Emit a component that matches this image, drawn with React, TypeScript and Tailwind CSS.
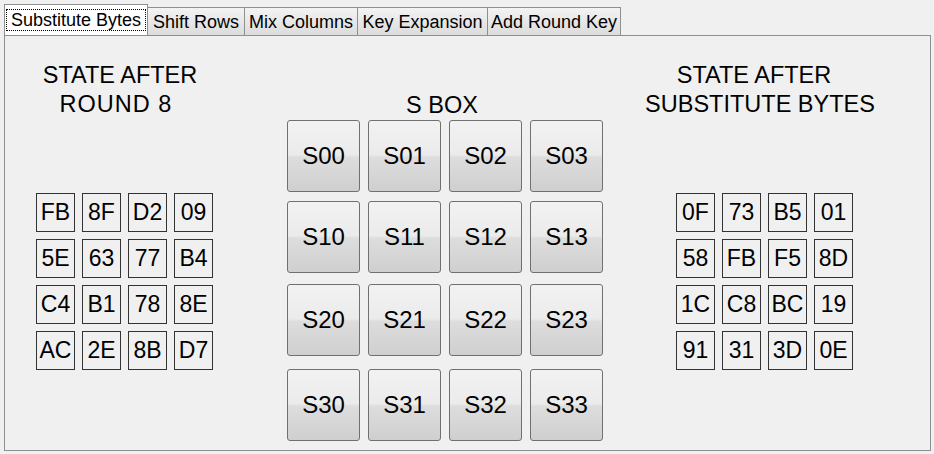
import React from 'react';

const TABS: { label: string; width: string }[] = [
  { label: 'Substitute Bytes', width: 'w-[144px]' },
  { label: 'Shift Rows', width: 'w-[98px]' },
  { label: 'Mix Columns', width: 'w-[114px]' },
  { label: 'Key Expansion', width: 'w-[131px]' },
  { label: 'Add Round Key', width: 'w-[134px]' },
];

const STATE_BEFORE = [
  ['FB', '8F', 'D2', '09'],
  ['5E', '63', '77', 'B4'],
  ['C4', 'B1', '78', '8E'],
  ['AC', '2E', '8B', 'D7'],
];

const STATE_AFTER = [
  ['0F', '73', 'B5', '01'],
  ['58', 'FB', 'F5', '8D'],
  ['1C', 'C8', 'BC', '19'],
  ['91', '31', '3D', '0E'],
];

// gaps between s-box rows are uneven in the original
const SBOX_ROW_MARGIN = ['mt-0', 'mt-[9px]', 'mt-[11px]', 'mt-[13px]'];

function ByteGrid({ rows }: { rows: string[][] }) {
  return (
    <div className="flex flex-col gap-[7px]">
      {rows.map((row, r) => (
        <div key={r} className="flex gap-[7px]">
          {row.map((b, c) => (
            <div
              key={c}
              className="flex h-[39px] w-[39px] items-center justify-center border border-[#333333] bg-[#f0f0f0] text-[23px] leading-none text-black"
            >
              {b}
            </div>
          ))}
        </div>
      ))}
    </div>
  );
}

export default function App() {
  return (
    <div
      className="h-[454px] w-[934px] overflow-hidden bg-[#f0f0f0] text-black"
      style={{ fontFamily: '"Liberation Sans", Arial, sans-serif' }}
    >
      {/* Tab strip */}
      <div className="flex h-[35px] items-end pl-[4px] pt-[4px]">
        {TABS.map((tab, i) => {
          const active = i === 0;
          return (
            <div
              key={tab.label}
              className={`relative ${tab.width} -mr-px flex items-center justify-center border border-b-0 border-[#8e8f8f] text-[18px] leading-none ${
                active
                  ? 'z-10 h-[31px] bg-white'
                  : 'h-[28px] bg-gradient-to-b from-[#f3f3f3] to-[#dcdcdc]'
              }`}
            >
              {active ? (
                <span className="flex h-[22px] w-[140px] items-center justify-center border border-dotted border-black">
                  {tab.label}
                </span>
              ) : (
                tab.label
              )}
            </div>
          );
        })}
      </div>

      {/* Tab panel */}
      <div className="ml-[4px] h-[416px] w-[927px] border border-[#8e8f8f] bg-[#f0f0f0]">
        <div className="flex items-start">
          {/* Left: state before */}
          <div className="ml-[10px] w-[210px] pt-[25px]">
            <div className="text-center text-[23.5px] leading-[29px]">
              <div>STATE AFTER</div>
              <div className="pr-[8px] tracking-[1px]">ROUND 8</div>
            </div>
            <div className="ml-[21px] mt-[74px]">
              <ByteGrid rows={STATE_BEFORE} />
            </div>
          </div>

          {/* Center: S box */}
          <div className="ml-[62px] w-[316px] pt-[55px]">
            <div className="pr-[6px] text-center text-[23.5px] leading-[29px]">S BOX</div>
            <div>
              {[0, 1, 2, 3].map((r) => (
                <div key={r} className={`flex gap-[8px] ${SBOX_ROW_MARGIN[r]}`}>
                  {[0, 1, 2, 3].map((c) => (
                    <button
                      key={c}
                      className="flex h-[72px] w-[73px] items-center justify-center rounded-[3px] border border-[#707070] bg-[linear-gradient(to_bottom,#f2f2f2_0%,#ebebeb_48%,#dddddd_52%,#cfcfcf_100%)] text-[24px] leading-none text-black"
                    >
                      S{r}
                      {c}
                    </button>
                  ))}
                </div>
              ))}
            </div>
          </div>

          {/* Right: state after */}
          <div className="ml-[37px] w-[240px] pt-[25px]">
            <div className="text-center text-[23.5px] leading-[29px]">
              <div className="pr-[12px]">STATE AFTER</div>
              <div>SUBSTITUTE BYTES</div>
            </div>
            <div className="ml-[36px] mt-[74px]">
              <ByteGrid rows={STATE_AFTER} />
            </div>
          </div>
        </div>
      </div>
    </div>
  );
}
